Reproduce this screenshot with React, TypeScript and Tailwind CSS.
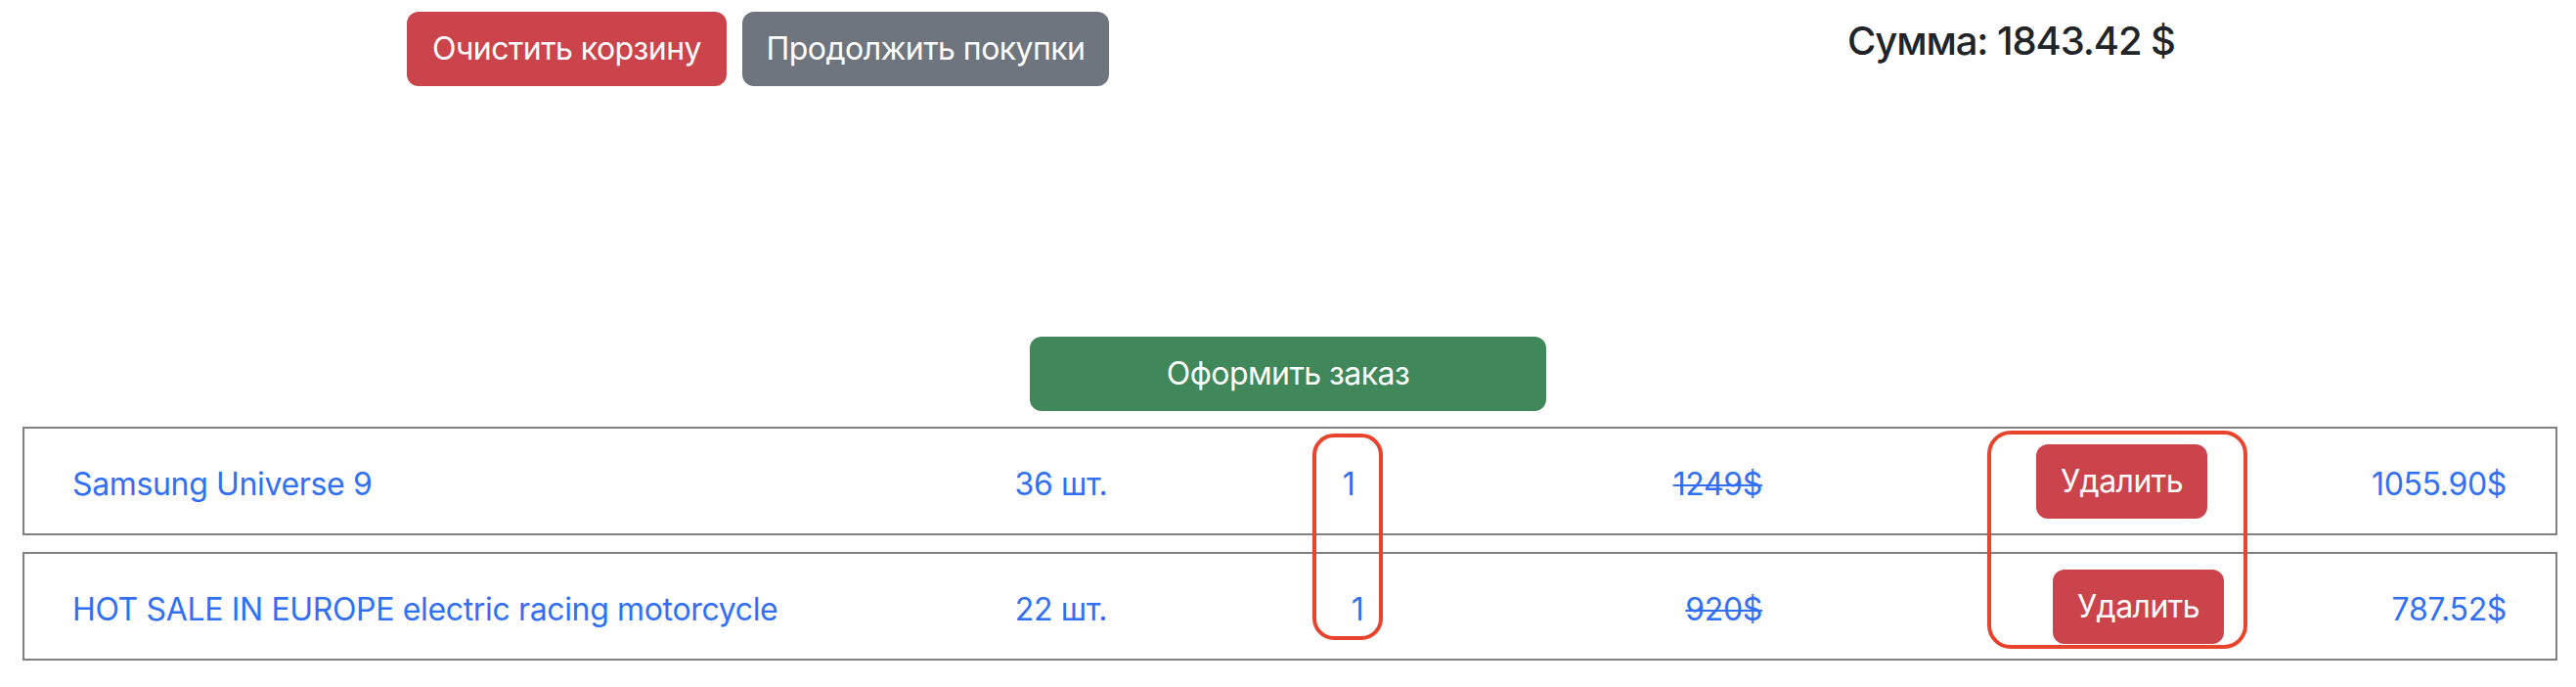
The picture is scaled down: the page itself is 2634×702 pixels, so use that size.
import React from 'react';

type CartRow = {
  name: string;
  stock: string;
  count: number;
  oldPrice: string;
  total: string;
  oneShift: string;
  btnShift: string;
};

const rows: CartRow[] = [
  {
    name: 'Samsung Universe 9',
    stock: '36 шт.',
    count: 1,
    oldPrice: '1249$',
    total: '1055.90$',
    oneShift: 'pr-[12px]',
    btnShift: 'ml-[280px]',
  },
  {
    name: 'HOT SALE IN EUROPE electric racing motorcycle',
    stock: '22 шт.',
    count: 1,
    oldPrice: '920$',
    total: '787.52$',
    oneShift: 'pl-[6px]',
    btnShift: 'ml-[297px]',
  },
];

export default function App() {
  return (
    <div className="relative w-[2634px] h-[702px] bg-white text-[#212529] font-['Inter','Noto_Sans',sans-serif] tracking-[-0.55px] overflow-hidden">
      {/* top bar: actions + sum */}
      <div className="flex items-start pt-[12px]">
        <div className="ml-[416px] flex gap-[16px]">
          <button className="w-[327px] h-[76px] rounded-[12px] bg-[#cb444b] text-white text-[32px] leading-none">
            Очистить корзину
          </button>
          <button className="w-[375px] h-[76px] rounded-[12px] bg-[#6f757e] text-white text-[32px] leading-none">
            Продолжить покупки
          </button>
        </div>
        <div className="ml-[755px] pt-[6px] text-[40px] leading-[48px] font-medium tracking-[-1.1px] whitespace-nowrap">
          Сумма: 1843.42 $
        </div>
      </div>

      {/* checkout */}
      <div className="mt-[256px] flex justify-center">
        <button className="w-[528px] h-[76px] rounded-[12px] bg-[#40875a] text-white text-[32px] leading-none">
          Оформить заказ
        </button>
      </div>

      {/* cart items */}
      <div className="mt-[16px] flex flex-col gap-[17px]">
        {rows.map((r, i) => (
          <div
            key={i}
            className="ml-[23px] w-[2592px] h-[111px] border-2 border-[#808080] flex items-center pl-[49px] pr-[50px] text-[32px] tracking-[-0.35px] text-[#316ff4] whitespace-nowrap"
          >
            <div className="w-[886px] pt-[6px]">{r.name}</div>
            <div className="w-[250px] pt-[6px] text-center">{r.stock}</div>
            <div className={`w-[350px] pt-[6px] text-center ${r.oneShift}`}>{r.count}</div>
            <div className="w-[242px] pt-[6px] text-right line-through decoration-2">{r.oldPrice}</div>
            <div className="w-[598px] flex">
              <button className={`h-[76px] w-[175px] rounded-[12px] bg-[#cb444b] text-white text-[32px] tracking-[-0.55px] leading-none ${r.btnShift}`}>
                Удалить
              </button>
            </div>
            <div className="flex-1 pt-[6px] text-right">{r.total}</div>
          </div>
        ))}
      </div>

      {/* annotation marks */}
      <div className="absolute left-[1342px] top-[443px] w-[72px] h-[211px] border-4 border-[#e8432c] rounded-[22px]" />
      <div className="absolute left-[2032px] top-[440px] w-[266px] h-[223px] border-4 border-[#e8432c] rounded-[24px]" />
    </div>
  );
}
